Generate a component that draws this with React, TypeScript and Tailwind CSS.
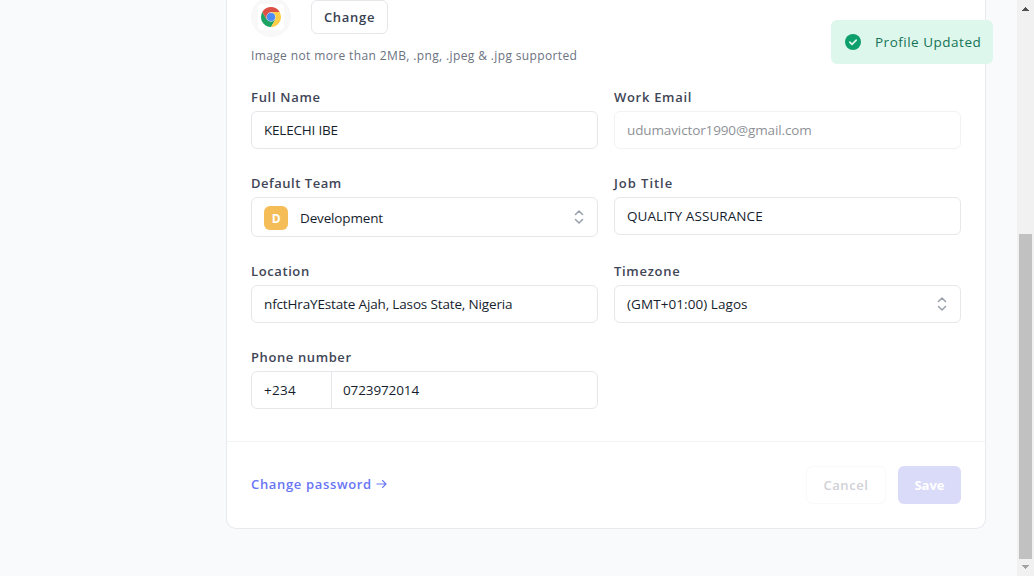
import React from "react";

function Label({ children, className = "" }: { children: React.ReactNode; className?: string }) {
  return (
    <div className={`mb-1 h-5 text-[13px] leading-5 font-semibold whitespace-nowrap text-[#3f4657] ${className}`}>
      <span>{children}</span>
    </div>
  );
}

function Sorter() {
  return (
    <svg className="ml-auto h-5 w-5 shrink-0" viewBox="0 0 20 20" fill="none" stroke="#9ca3af" strokeWidth="1.6" strokeLinecap="round" strokeLinejoin="round">
      <path d="M6.500 7.500 10 4l3.500 3.500M13.500 12.500 10 16l-3.500-3.500" />
    </svg>
  );
}

const box = "flex w-full items-center rounded-md border border-[#e5e7eb] bg-white px-3 text-[13.5px] leading-5 whitespace-nowrap text-[#161e2e]";

export default function App() {
  return (
    <div className="relative flex h-[576px] w-[1034px] overflow-hidden bg-[#f9fafc] font-['Open_Sans','Noto_Sans',sans-serif]">
      <main className="flex flex-1 pl-[226px]">
        <section className="flex h-[529px] w-[760px] flex-col rounded-b-[10px] border-x border-b border-[#e8eaee] bg-white">
          <div className="px-6">
            <div className="flex h-[34px] items-start">
              <div className="-mt-[3px] flex h-10 w-10 items-center justify-center rounded-full bg-[#f8f8f8]">
                <div className="flex h-[26px] w-[26px] items-center justify-center rounded bg-white">
                  <svg className="h-5 w-5" viewBox="0 0 20 20">
                    <path d="M5.670 12.500 1.340 5A10 10 0 0 0 10 20l4.330-7.500Z" fill="#1da462" />
                    <path d="M10 5h8.660A10 10 0 0 1 10 20l4.330-7.500Z" fill="#ffcd46" />
                    <path d="M1.340 5A10 10 0 0 1 18.660 5H10L5.670 12.500Z" fill="#dd5144" />
                    <circle cx="10" cy="10" r="4.700" fill="#d5dbe6" />
                    <circle cx="10" cy="10" r="4.100" fill="#4c8bf5" />
                  </svg>
                </div>
              </div>
              <button className="ml-5 h-[34px] w-[77px] rounded-md border border-[#e5e7eb] text-[13px] leading-5 font-semibold tracking-[0.7px] text-[#374151]">
                <span>Change</span>
              </button>
            </div>
            <p className="mt-[14px] mb-[23px] h-4 text-[12px] leading-4 tracking-[0.37px] whitespace-nowrap text-[#6b7280]">
              <span>Image not more than 2MB, .png, .jpeg &amp; .jpg supported</span>
            </p>
            <div className="grid grid-cols-2 gap-x-4 gap-y-6 pb-8">
              <div>
                <Label className="tracking-[0.7px]">Full Name</Label>
                <div className={`${box} h-[38px] tracking-[-0.2px]`}><span>KELECHI IBE</span></div>
              </div>
              <div>
                <Label className="tracking-[0.7px]">Work Email</Label>
                <div className={`${box} h-[38px] tracking-[-0.12px] opacity-50`}><span>udumavictor1990@gmail.com</span></div>
              </div>
              <div>
                <Label className="tracking-[0.52px]">Default Team</Label>
                <div className={`${box} h-10 pr-2 tracking-[-0.15px]`}>
                  <span className="mt-0.5 mr-3 flex h-6 w-6 items-center justify-center rounded-md bg-[#f5bd58] pt-0.5 text-[12px] font-bold text-white">D</span>
                  <span className="mt-0.5">Development</span>
                  <Sorter />
                </div>
              </div>
              <div>
                <Label className="tracking-[0.95px]">Job Title</Label>
                <div className={`${box} h-[38px] tracking-[0.08px]`}><span>QUALITY ASSURANCE</span></div>
              </div>
              <div>
                <Label className="tracking-[0.6px]">Location</Label>
                <div className={`${box} h-[38px] tracking-[-0.15px]`}><span>nfctHraYEstate Ajah, Lasos State, Nigeria</span></div>
              </div>
              <div>
                <Label className="tracking-[0.7px]">Timezone</Label>
                <div className={`${box} h-[38px] pr-2 tracking-[0.07px]`}><span>(GMT+01:00) Lagos</span><Sorter /></div>
              </div>
              <div>
                <Label className="tracking-[0.6px]">Phone number</Label>
                <div className={`${box} h-[38px] tracking-[-0.12px]`}>
                  <span className="flex h-9 w-[68px] items-center border-r border-[#e5e7eb] tracking-[0.3px]">+234</span>
                  <span className="pl-[11px]">0723972014</span>
                </div>
              </div>
            </div>
          </div>
          <footer className="flex items-start border-t border-[#f1f3f6] px-6 pt-6">
            <a className="flex h-9 items-center text-[13px] font-semibold tracking-[0.66px] text-[#6875f5]">
              <span className="pt-0.5">Change password</span>
              <svg className="ml-1 h-3 w-[11px]" viewBox="0 0 11 12" fill="none" stroke="currentColor" strokeWidth="1.200"><path d="M.5 6h9.500M6.200 2.200 10 6 6.200 9.800" /></svg>
            </a>
            <button className="ml-auto h-[38px] w-20 rounded-md border border-[#f8f9fa] pt-0.5 text-[13px] font-semibold tracking-[0.6px] text-[#cfd1d6]"><span>Cancel</span></button>
            <button className="ml-3 h-[38px] w-[63px] rounded-md bg-[#dadaf9] pt-0.5 text-[13px] font-bold text-white"><span>Save</span></button>
          </footer>
        </section>
      </main>
      <aside className="flex w-[17px] flex-col items-center justify-between bg-[#f1f1f1]">
        <svg className="h-[17px] w-[17px] shrink-0" viewBox="0 0 17 17" shapeRendering="crispEdges"><path d="M5 11h7v-1h-1v-1h-1v-1H9V7H8v1H7v1H6v1H5Z" fill="#505050" /></svg>
        <div className="mt-auto h-[325px] w-[13px] bg-[#c1c1c1]" />
        <svg className="h-[17px] w-[17px] shrink-0" viewBox="0 0 17 17" shapeRendering="crispEdges"><path d="M5 6h7v1h-1v1h-1v1H9v1H8V9H7V8H6V7H5Z" fill="#a3a3a3" /></svg>
      </aside>
      <div className="absolute top-5 left-[831px] flex h-11 w-[162px] items-center rounded-md bg-[#def7ec] pl-3.5 text-[13.5px] tracking-[0.5px] whitespace-nowrap text-[#147356]">
        <svg className="mr-3.5 h-4 w-4" viewBox="0 0 16 16"><circle cx="8" cy="8" r="8" fill="#0e9f6e" /><path d="m4.800 8.200 2.200 2.200 4.200-4.200" fill="none" stroke="#def7ec" strokeWidth="1.700" strokeLinecap="round" strokeLinejoin="round" /></svg>
        <span>Profile Updated</span>
      </div>
    </div>
  );
}
